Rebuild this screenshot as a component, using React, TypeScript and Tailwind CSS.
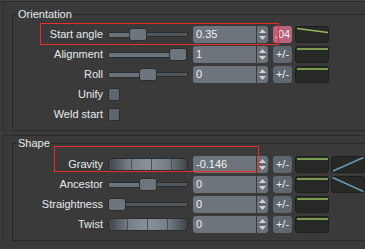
import React from 'react';

type Line = { x1: number; y1: number; x2: number; y2: number };

const flat: Line = { x1: 1, y1: 2, x2: 32, y2: 2 };

const Slider = ({ pos }: { pos: number }) => (
  <div className="ml-[5px] flex h-[17px] w-[80px] shrink-0 items-center">
    {pos > 0 && (
      <div className="h-[6px] rounded-l-[1px] border border-[#2b2e31] bg-[#6a7178]" style={{ width: pos + 1 }} />
    )}
    <div className={`h-[13px] w-[18px] shrink-0 rounded-[3px] border border-[#2b2e31] bg-[#6e757c] ${pos > 0 ? '-ml-px' : ''}`} />
    <div className="-ml-px h-[5px] flex-1 border border-[#2b2e31] bg-[#51565b]" />
  </div>
);

const Jog = ({ ticks }: { ticks: number[] }) => (
  <div className="relative ml-[5px] h-[13px] w-[80px] shrink-0 overflow-hidden rounded-[4px] border border-[#2b2e31] bg-[linear-gradient(to_right,#3f4449,#767d85_25%,#8a9299_50%,#767d85_75%,#3f4449)]">
    {ticks.map((t) => (
      <div key={t} className="absolute top-0 bottom-0 w-px bg-[#4a4f55]" style={{ left: t }} />
    ))}
  </div>
);

const Spin = ({ value }: { value: string }) => (
  <div className="ml-[5px] flex h-[17px] w-[75px] shrink-0">
    <div className="flex-1 rounded-l-[3px] bg-[#6d747c] pl-[3px] text-[11px] leading-[17px] text-[#f0f2f4]">{value}</div>
    <div className="ml-px w-[11px] rounded-r-[3px] bg-[#697077]">
      <svg width="11" height="17" viewBox="0 0 11 17">
        <polygon points="2,7 5.5,3 9,7" fill="#ced2d6" />
        <line x1="2" y1="8.5" x2="9" y2="8.5" stroke="#5a6066" />
        <polygon points="2,10 9,10 5.5,14" fill="#ced2d6" />
      </svg>
    </div>
  </div>
);

const PlusMinus = ({ label = '+/-', pink = false }: { label?: string; pink?: boolean }) => (
  <div
    className={`ml-[5px] flex h-[17px] w-[19px] shrink-0 items-center justify-center overflow-hidden rounded-[3px] text-[11px] text-[#eceef0] ${
      pink ? 'bg-[#b8637f]' : 'bg-[#61676e]'
    }`}
  >
    {label}
  </div>
);

const CurveBox = ({ line, color = '#93b85c', first = true }: { line: Line; color?: string; first?: boolean }) => (
  <div className={`${first ? 'ml-[3px]' : 'ml-[2px]'} h-[17px] w-[34px] shrink-0 rounded-[3px] border border-[#1e1f1e] bg-[#272927]`}>
    <svg width="32" height="15" viewBox="0 0 32 15" className="block">
      <line {...line} stroke={color} strokeWidth="1.6" />
    </svg>
  </div>
);

const Label = ({ children }: { children: React.ReactNode }) => (
  <div className="w-[90px] shrink-0 text-right text-[11px] leading-[17px] text-[#e6eaee]">{children}</div>
);

const Row = ({ children }: { children: React.ReactNode }) => <div className="flex h-[17px] items-center">{children}</div>;

const Checkbox = () => (
  <div className="ml-[5px] h-[13px] w-[12px] rounded-[2px] border border-[#2b2e31] bg-[#5f656c]" />
);

export default function App() {
  return (
    <div className="relative h-[249px] w-[365px] overflow-hidden bg-[#3a3a3a] font-['Liberation_Sans',Arial,sans-serif]">
      <div className="h-[2px] border-b border-[#2c2c2c] bg-[#444444]" />

      <div className="ml-[3px] w-[420px] border-l border-[#2c2c2c] pl-[8px] pt-[6px]">
        {/* Orientation */}
        <fieldset className="rounded-[2px] border border-[#2a2a2a] pb-[7px] pt-[5px]">
          <legend className="ml-[4px] px-px text-[11px] leading-[13px] text-[#e6eaee]">Orientation</legend>
          <div className="flex flex-col gap-[3px]">
            <Row>
              <Label>Start angle</Label>
              <Slider pos={21} />
              <Spin value="0.35" />
              <PlusMinus label=".04" pink />
              <CurveBox line={{ x1: 1, y1: 1.5, x2: 32, y2: 5.5 }} />
            </Row>
            <Row>
              <Label>Alignment</Label>
              <Slider pos={63} />
              <Spin value="1" />
              <PlusMinus />
              <CurveBox line={flat} />
            </Row>
            <Row>
              <Label>Roll</Label>
              <Slider pos={31} />
              <Spin value="0" />
              <PlusMinus />
              <CurveBox line={flat} />
            </Row>
            <Row>
              <Label>Unify</Label>
              <Checkbox />
            </Row>
            <Row>
              <Label>Weld start</Label>
              <Checkbox />
            </Row>
          </div>
        </fieldset>
      </div>

      <div className="mt-[4px] ml-[3px] w-[420px] border-l border-t border-[#2c2c2c] pl-[8px] pt-[1px]">
        {/* Shape */}
        <fieldset className="rounded-[2px] border border-[#2a2a2a] pb-[7px] pt-[6px]">
          <legend className="ml-[4px] px-px text-[11px] leading-[13px] text-[#e6eaee]">Shape</legend>
          <div className="flex flex-col gap-[3px]">
            <Row>
              <Label>Gravity</Label>
              <Jog ticks={[1, 22, 42, 62]} />
              <Spin value="-0.146" />
              <PlusMinus />
              <CurveBox line={flat} />
              <CurveBox first={false} color="#7096b1" line={{ x1: 1, y1: 14, x2: 31.5, y2: 0.5 }} />
            </Row>
            <Row>
              <Label>Ancestor</Label>
              <Slider pos={31} />
              <Spin value="0" />
              <PlusMinus />
              <CurveBox line={flat} />
              <CurveBox first={false} color="#7096b1" line={{ x1: 0.5, y1: 0.5, x2: 31.5, y2: 14.5 }} />
            </Row>
            <Row>
              <Label>Straightness</Label>
              <Slider pos={0} />
              <Spin value="0" />
              <PlusMinus />
              <CurveBox line={flat} />
            </Row>
            <Row>
              <Label>Twist</Label>
              <Jog ticks={[1, 18, 38, 58]} />
              <Spin value="0" />
              <PlusMinus />
              <CurveBox line={flat} />
            </Row>
          </div>
        </fieldset>
      </div>

      {/* annotation frames */}
      <div className="pointer-events-none absolute left-[40px] top-[23px] h-[22px] w-[239px] border border-[#ec2a2c]" />
      <div className="pointer-events-none absolute left-[54px] top-[146px] h-[26px] w-[205px] border border-[#ec2a2c]" />
    </div>
  );
}
